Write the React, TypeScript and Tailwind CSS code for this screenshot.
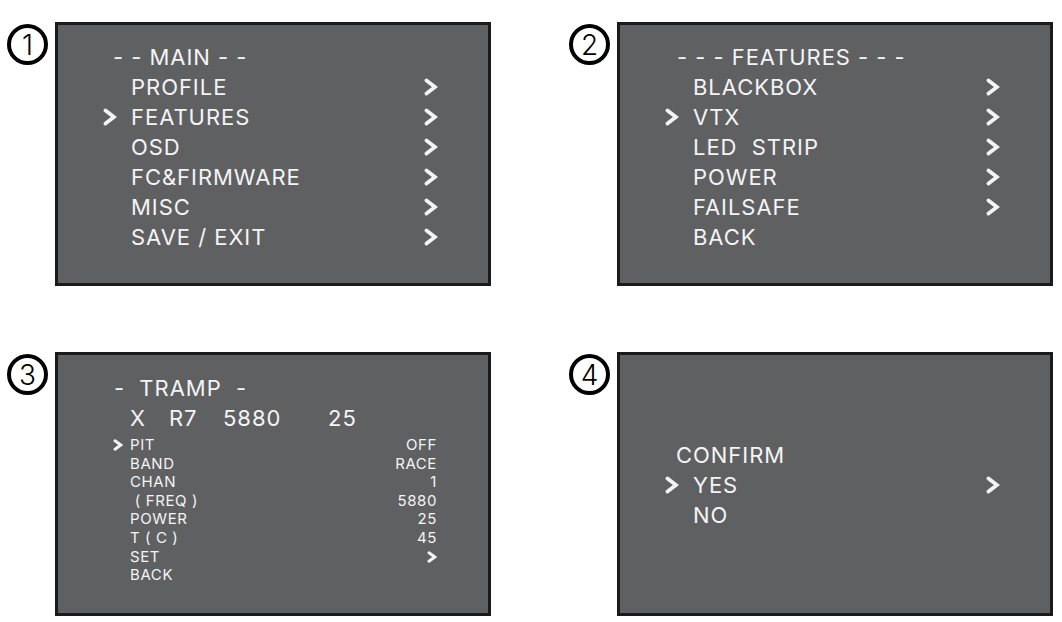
import React from 'react';

const font = { fontFamily: 'Inter, "Open Sans", sans-serif' };

function Chevron({ small = false }: { small?: boolean }) {
  if (small) {
    return (
      <svg width="10" height="12" viewBox="0 0 10 12" className="block">
        <polyline points="2,1.8 7.8,6 2,10.2" fill="none" stroke="#f4f4f4" strokeWidth="3" strokeLinecap="round" strokeLinejoin="miter" />
      </svg>
    );
  }
  return (
    <svg width="14" height="18" viewBox="0 0 14 18" className="block">
      <polyline points="2.5,2.5 11,9 2.5,15.5" fill="none" stroke="#f4f4f4" strokeWidth="3.8" strokeLinecap="round" strokeLinejoin="miter" />
    </svg>
  );
}

function Badge({ n }: { n: number }) {
  return (
    <div className="mt-[2px] -ml-[1px] w-[41px] h-[41px] shrink-0 rounded-full border-4 border-black flex items-center justify-center text-[28px] font-light leading-none text-black">
      {n}
    </div>
  );
}

function Panel({ children, top }: { children: React.ReactNode; top: string }) {
  return (
    <div className={`ml-[7px] w-[436px] h-[264px] border-[3px] border-[#1b1b1b] bg-[#5f6062] text-[#f4f4f4] tracking-[0.06em] ${top}`}>
      {children}
    </div>
  );
}

type Item = { label: string; sel?: boolean; arrow?: boolean };

function BigRow({ label, sel, arrow }: Item) {
  return (
    <div className="flex items-center h-[30px] pl-[45px] pr-[50px] text-[22px] leading-[30px]">
      <div className="w-[28px] shrink-0">{sel && <Chevron />}</div>
      <div className="flex-1 whitespace-pre">{label}</div>
      <div className="w-[14px] shrink-0">{arrow && <Chevron />}</div>
    </div>
  );
}

function SmallRow({ label, value, sel }: { label: string; value?: string; sel?: boolean }) {
  return (
    <div className="flex items-center h-[18.6px] pl-[55px] pr-[51px] text-[15px] leading-[18.6px] tracking-[0.04em]">
      <div className="w-[17px] shrink-0">{sel && <Chevron small />}</div>
      <div className="flex-1 whitespace-pre">{label}</div>
      <div className="whitespace-pre text-right">
        {value === '>' ? <Chevron small /> : value}
      </div>
    </div>
  );
}

const mainItems: Item[] = [
  { label: 'PROFILE', arrow: true },
  { label: 'FEATURES', sel: true, arrow: true },
  { label: 'OSD', arrow: true },
  { label: 'FC&FIRMWARE', arrow: true },
  { label: 'MISC', arrow: true },
  { label: 'SAVE / EXIT', arrow: true },
];

const featureItems: Item[] = [
  { label: 'BLACKBOX', arrow: true },
  { label: 'VTX', sel: true, arrow: true },
  { label: 'LED  STRIP', arrow: true },
  { label: 'POWER', arrow: true },
  { label: 'FAILSAFE', arrow: true },
  { label: 'BACK' },
];

const trampRows = [
  { label: 'PIT', value: 'OFF', sel: true },
  { label: 'BAND', value: 'RACE' },
  { label: 'CHAN', value: '1' },
  { label: ' ( FREQ )', value: '5880' },
  { label: 'POWER', value: '25' },
  { label: 'T ( C )', value: '45' },
  { label: 'SET', value: '>' },
  { label: 'BACK' },
];

export default function App() {
  return (
    <div className="w-[1062px] h-[622px] bg-white pt-[22px] pl-[8px] overflow-hidden" style={font}>
      <div className="grid grid-cols-[483px_484px] gap-x-[79px] gap-y-[66px]">
        <div className="flex items-start">
          <Badge n={1} />
          <Panel top="pt-[17px]">
            <div className="h-[30px] pl-[55px] text-[22px] leading-[30px] whitespace-pre">- - MAIN - -</div>
            {mainItems.map(it => <BigRow key={it.label} {...it} />)}
          </Panel>
        </div>

        <div className="flex items-start">
          <Badge n={2} />
          <Panel top="pt-[17px]">
            <div className="h-[30px] pl-[57px] text-[22px] leading-[30px] whitespace-pre">- - - FEATURES - - -</div>
            {featureItems.map(it => <BigRow key={it.label} {...it} />)}
          </Panel>
        </div>

        <div className="flex items-start">
          <Badge n={3} />
          <Panel top="pt-[18px]">
            <div className="h-[30px] pl-[56px] text-[22px] leading-[30px] whitespace-pre">-  TRAMP  -</div>
            <div className="flex h-[30px] pl-[72px] text-[22px] leading-[30px]">
              <span className="w-[39px]">X</span>
              <span className="w-[54px]">R7</span>
              <span className="w-[105px]">5880</span>
              <span>25</span>
            </div>
            <div className="mt-[3px]">
              {trampRows.map(r => <SmallRow key={r.label} {...r} />)}
            </div>
          </Panel>
        </div>

        <div className="flex items-start">
          <Badge n={4} />
          <Panel top="pt-[85px]">
            <div className="h-[30px] pl-[56px] text-[22px] leading-[30px]">CONFIRM</div>
            <BigRow label="YES" sel arrow />
            <BigRow label="NO" />
          </Panel>
        </div>
      </div>
    </div>
  );
}
